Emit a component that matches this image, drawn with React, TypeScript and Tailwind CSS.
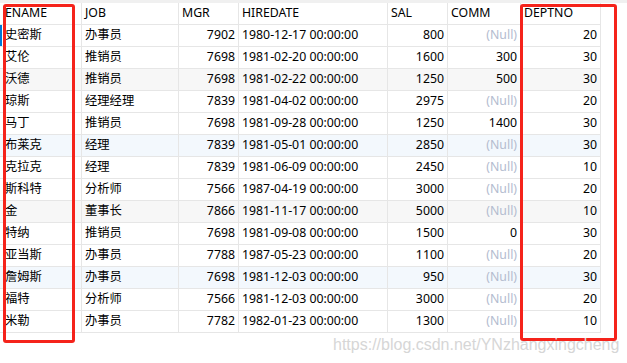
import React from 'react';

type Row = [string, string, number, string, number, number | null, number];

const rows: Row[] = [
  ['史密斯', '办事员', 7902, '1980-12-17 00:00:00', 800, null, 20],
  ['艾伦', '推销员', 7698, '1981-02-20 00:00:00', 1600, 300, 30],
  ['沃德', '推销员', 7698, '1981-02-22 00:00:00', 1250, 500, 30],
  ['琼斯', '经理经理', 7839, '1981-04-02 00:00:00', 2975, null, 20],
  ['马丁', '推销员', 7698, '1981-09-28 00:00:00', 1250, 1400, 30],
  ['布莱克', '经理', 7839, '1981-05-01 00:00:00', 2850, null, 30],
  ['克拉克', '经理', 7839, '1981-06-09 00:00:00', 2450, null, 10],
  ['斯科特', '分析师', 7566, '1987-04-19 00:00:00', 3000, null, 20],
  ['金', '董事长', 7866, '1981-11-17 00:00:00', 5000, null, 10],
  ['特纳', '推销员', 7698, '1981-09-08 00:00:00', 1500, 0, 30],
  ['亚当斯', '办事员', 7788, '1987-05-23 00:00:00', 1100, null, 20],
  ['詹姆斯', '办事员', 7698, '1981-12-03 00:00:00', 950, null, 30],
  ['福特', '分析师', 7566, '1981-12-03 00:00:00', 3000, null, 20],
  ['米勒', '办事员', 7782, '1982-01-23 00:00:00', 1300, null, 10],
];

const headers = ['ENAME', 'JOB', 'MGR', 'HIREDATE', 'SAL', 'COMM', 'DEPTNO'];

// row tints as seen in the grid: gray / light blue every third row
const rowBg = (i: number) =>
  i === 2 || i === 8 ? 'bg-[#f7f7f7]' : i === 5 || i === 11 ? 'bg-[#f3f8fd]' : 'bg-white';

const cell = 'h-[22px] flex items-center border-r border-b border-[#e6e6e6] whitespace-nowrap overflow-hidden';

export default function App() {
  return (
    <div
      className="relative w-[627px] h-[363px] bg-white text-[12.3px] text-black overflow-hidden"
      style={{ fontFamily: '"Noto Sans", "Noto Sans CJK SC", sans-serif' }}
    >
      <div className="h-[3px] bg-[#f0f0f0]" />
      <div className="grid w-[601px] grid-cols-[82px_97px_60px_149px_60px_73px_80px]">
        {headers.map((h, i) => (
          <div key={h} className={`${cell} h-[21px] bg-white ${i === 0 ? 'pl-[5px]' : 'pl-[3px]'}`}>
            {h}
          </div>
        ))}
        {rows.map((r, i) => {
          const bg = rowBg(i);
          return (
            <React.Fragment key={i}>
              <div className={`${cell} ${bg} pl-[5px] relative`}>
                {i === 0 && <span className="absolute left-0 top-0 h-full w-[2px] bg-[#0078d7]" />}
                {r[0]}
              </div>
              <div className={`${cell} ${bg} pl-[3px]`}>{r[1]}</div>
              <div className={`${cell} ${bg} justify-end pr-[3px]`}>{r[2]}</div>
              <div className={`${cell} ${bg} pl-[3px]`}>{r[3]}</div>
              <div className={`${cell} ${bg} justify-end pr-[3px]`}>{r[4]}</div>
              <div className={`${cell} ${bg} justify-end pr-[3px]`}>
                {r[5] === null ? <span className="text-[#b3bccf]">(Null)</span> : r[5]}
              </div>
              <div className={`${cell} ${bg} justify-end pr-[3px]`}>{r[6]}</div>
            </React.Fragment>
          );
        })}
      </div>

      {/* red highlight boxes */}
      <div className="absolute left-[3px] top-[4px] w-[72px] h-[339px] border-[3px] border-[#f5231b] rounded-[3px]" />
      <div className="absolute left-[520px] top-[4px] w-[97px] h-[337px] border-[3px] border-[#f5231b] rounded-[3px]" />

      {/* watermark */}
      <div
        className="absolute left-[333px] top-[333px] text-[16px] text-[#d6d6d6]"
        style={{ fontFamily: '"Liberation Sans", Arial, sans-serif' }}
      >
        https://blog.csdn.net/YNzhangxingcheng
      </div>
    </div>
  );
}
